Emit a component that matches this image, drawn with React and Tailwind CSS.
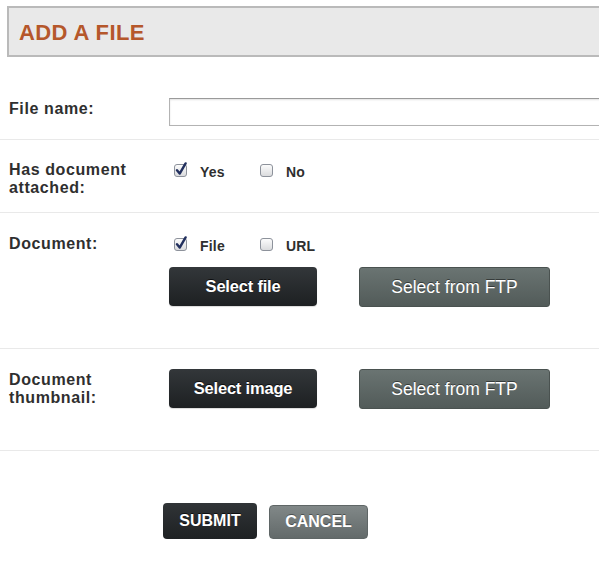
import React from 'react';

const Check = ({ checked }) => (
    <svg width="16" height="16" viewBox="0 0 16 16" className="shrink-0">
        <defs>
            <linearGradient id={checked ? 'cbOn' : 'cbOff'} x1="0" y1="0" x2="0" y2="1">
                <stop offset="0" stopColor="#fdfdfd" />
                <stop offset="1" stopColor="#d9dadc" />
            </linearGradient>
        </defs>
        <rect
            x="1.5"
            y="2.5"
            width="12"
            height="12"
            rx="2.5"
            fill={`url(#${checked ? 'cbOn' : 'cbOff'})`}
            stroke="#8d929b"
        />
        {checked && (
            <path
                d="M4 8.3 L6.7 11.6 L12.6 1.4"
                stroke="#22305e"
                strokeWidth="2.4"
                fill="none"
                strokeLinecap="round"
                strokeLinejoin="round"
            />
        )}
    </svg>
);

const Option = ({ checked, label }) => (
    <div className="flex items-center w-[86px]">
        <Check checked={checked} />
        <span className="ml-[11px] mt-[5px] text-[14px] font-bold tracking-[0.2px]">{label}</span>
    </div>
);

const darkBtn =
    'w-[148px] h-[39px] rounded-[4px] bg-linear-to-b from-[#33373a] to-[#1d2022] text-white font-bold text-[16.5px] tracking-[-0.2px] [text-shadow:0_-1px_0_rgba(0,0,0,0.7)] shadow-[0_1px_1px_rgba(0,0,0,0.15)]';
const ftpBtn =
    'w-[191px] h-[40px] rounded-[3px] border border-[#4a5250] bg-linear-to-b from-[#6a7472] to-[#525b59] text-white text-[17.5px] [text-shadow:0_-1px_0_rgba(0,0,0,0.45)]';
const labelCls = 'w-[160px] text-[16px] leading-[18px] font-bold tracking-[0.6px]';

const App = () => {
    return (
        <div className="w-[599px] h-[576px] overflow-hidden bg-white text-[#2f2f2f] font-['Liberation_Sans',Arial,sans-serif]">
            {/* header */}
            <div className="pt-[6px] pl-[7px]">
                <div className="h-[51px] border-2 border-r-0 border-[#bababa] bg-[#e9e9e9] flex items-center pl-[10px]">
                    <h1 className="text-[22px] font-bold tracking-[0.4px] text-[#b5572b] mt-[1px]">ADD A FILE</h1>
                </div>
            </div>

            {/* file name */}
            <div className="flex items-start pl-[9px] pt-[41px] pb-[13px] border-b border-[#e9e9e9]">
                <label className={`${labelCls} pt-[2px]`}>File name:</label>
                <input
                    type="text"
                    className="flex-1 h-[28px] -mr-[4px] border border-[#b3b3b3] border-t-[#9a9a9a] shadow-[inset_0_1px_2px_rgba(0,0,0,0.12)] outline-none"
                />
            </div>

            {/* has document */}
            <div className="flex items-start pl-[9px] pt-[21px] pb-[15px] border-b border-[#e9e9e9]">
                <label className={labelCls}>
                    Has document
                    <br />
                    attached:
                </label>
                <div className="flex h-[18px] items-center pl-[4px]">
                    <Option checked label="Yes" />
                    <Option label="No" />
                </div>
            </div>

            {/* document */}
            <div className="flex items-start pl-[9px] pt-[22px] pb-[41px] border-b border-[#e9e9e9]">
                <label className={labelCls}>Document:</label>
                <div className="flex flex-col">
                    <div className="flex h-[18px] items-center pl-[4px]">
                        <Option checked label="File" />
                        <Option label="URL" />
                    </div>
                    <div className="flex gap-[42px] mt-[14px]">
                        <button className={darkBtn}>Select file</button>
                        <button className={ftpBtn}>Select from FTP</button>
                    </div>
                </div>
            </div>

            {/* thumbnail */}
            <div className="flex items-center pl-[9px] pt-[20px] pb-[41px] border-b border-[#e9e9e9]">
                <label className={labelCls}>
                    Document
                    <br />
                    thumbnail:
                </label>
                <div className="flex gap-[42px]">
                    <button className={darkBtn}>Select image</button>
                    <button className={ftpBtn}>Select from FTP</button>
                </div>
            </div>

            {/* actions */}
            <div className="flex items-end gap-[12px] pl-[163px] pt-[52px]">
                <button className="w-[94px] h-[36px] rounded-[4px] bg-linear-to-b from-[#303437] to-[#1e2123] text-white font-bold text-[16px] [text-shadow:0_-1px_0_rgba(0,0,0,0.7)]">
                    SUBMIT
                </button>
                <button className="w-[99px] h-[34px] rounded-[4px] border border-[#5f6666] bg-linear-to-b from-[#818888] to-[#636a6a] text-white font-bold text-[16px] [text-shadow:0_-1px_0_rgba(0,0,0,0.4)]">
                    CANCEL
                </button>
            </div>
        </div>
    );
};

export default App;
